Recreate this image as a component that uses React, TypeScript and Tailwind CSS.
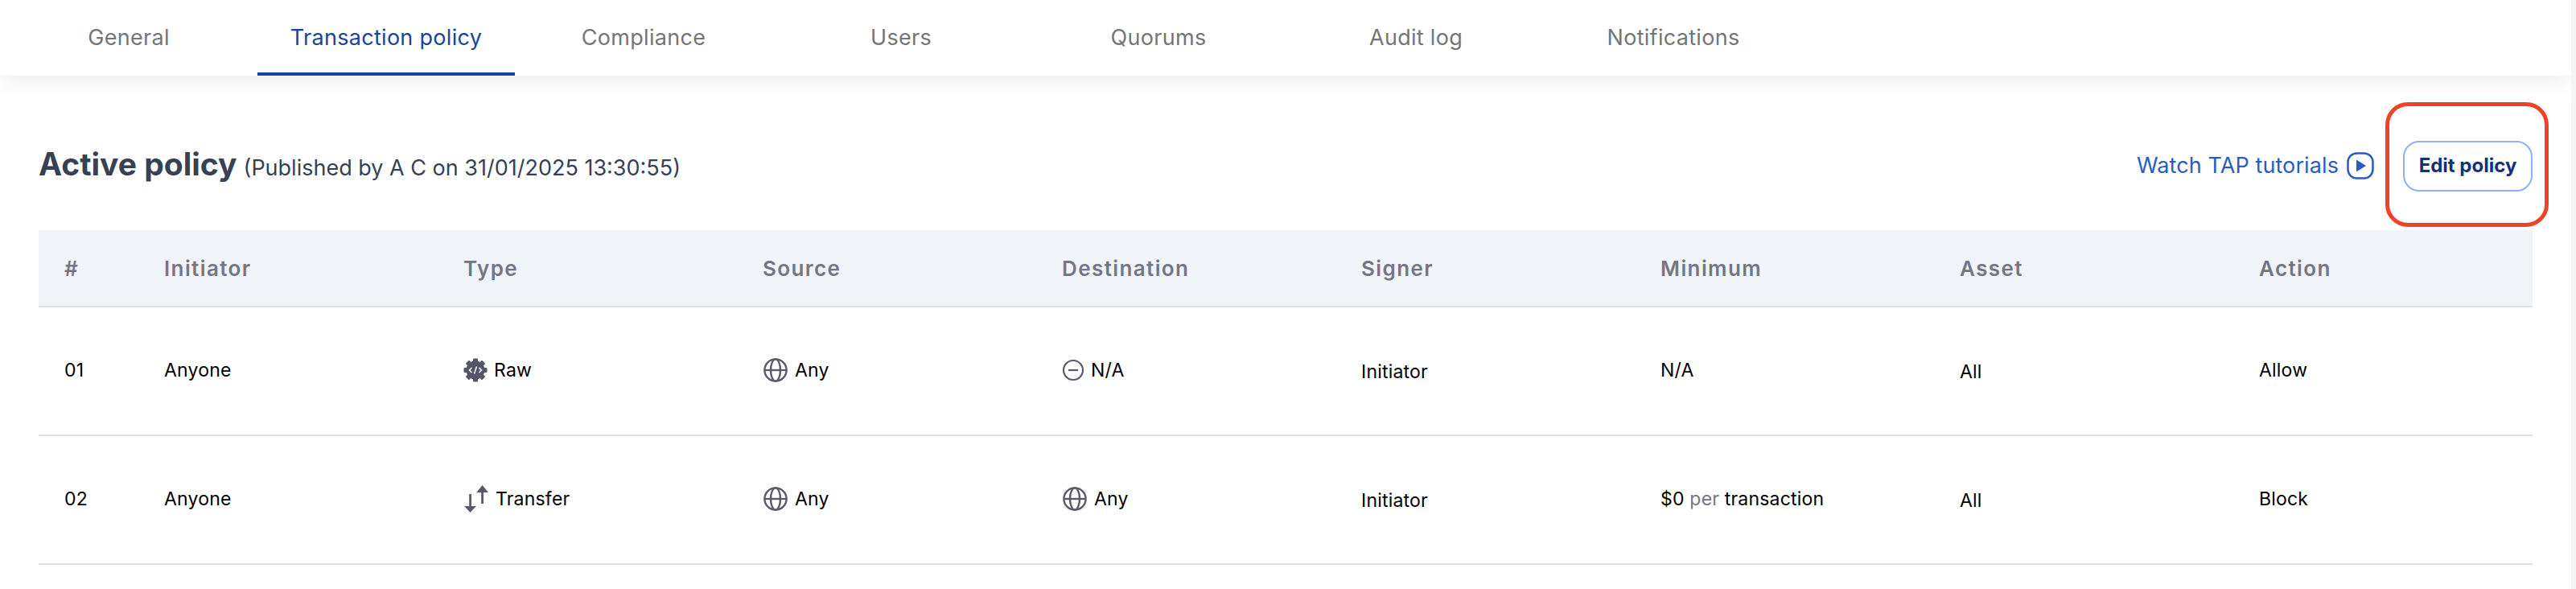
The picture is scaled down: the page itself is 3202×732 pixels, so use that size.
import React from "react";

function Globe() {
  return (
    <svg viewBox="0 0 32 32" className="w-[32px] h-[32px] shrink-0" fill="none" stroke="#5a5a6a" strokeWidth="2.4">
      <circle cx="16" cy="16" r="13.6" />
      <ellipse cx="16" cy="16" rx="6" ry="13.6" />
      <path d="M2.4 16h27.2" />
    </svg>
  );
}

function Minus() {
  return (
    <svg viewBox="0 0 28 28" className="w-[28px] h-[28px] shrink-0" fill="none" stroke="#5a5a6a" strokeWidth="2.2">
      <circle cx="14" cy="14" r="12" />
      <path d="M8 14h12" />
    </svg>
  );
}

function Gear() {
  const teeth = [0, 45, 90, 135, 180, 225, 270, 315];
  return (
    <svg viewBox="0 0 30 30" className="w-[30px] h-[30px] shrink-0">
      <circle cx="15" cy="15" r="11.5" fill="#55556a" />
      {teeth.map((a) => (
        <rect key={a} x="12" y="0.5" width="6" height="6" rx="1" fill="#55556a" transform={`rotate(${a} 15 15)`} />
      ))}
      <path d="M10.5 12 7.5 15l3 3M19.5 12l3 3-3 3M16.5 10.5l-3 9" fill="none" stroke="#fff" strokeWidth="1.5" />
    </svg>
  );
}

function Transfer() {
  return (
    <svg viewBox="0 0 32 34" className="w-[32px] h-[34px] shrink-0" fill="#5a5a6a">
      <path d="M23.6 0 31 9h-6v14h-2.800V9h-6z" />
      <path d="M7.200 11H10v15h6l-7.400 8L1 26h6.200z" />
    </svg>
  );
}

function Cell({ icon, children, nudge }: { icon?: React.ReactNode; children: React.ReactNode; nudge?: boolean }) {
  return (
    <div className={`w-[372px] shrink-0 flex items-center gap-[8px] pl-[32px] text-[23px] tracking-[0.2px] text-black ${nudge ? "pt-[2px]" : "pb-[2px]"}`}>
      {icon}
      <span>{children}</span>
    </div>
  );
}

const headers = ["Initiator", "Type", "Source", "Destination", "Signer", "Minimum", "Asset", "Action"];
const tabs = ["General", "Transaction policy", "Compliance", "Users", "Quorums", "Audit log", "Notifications"];

function Row({ n, type, typeIcon, dest, destIcon, min, action }: { n: string; type: string; typeIcon: React.ReactNode; dest: string; destIcon: React.ReactNode; min: React.ReactNode; action: string }) {
  return (
    <div className="flex h-[160px] border-b-2 border-[#e0e0e0]">
      <div className="w-[124px] shrink-0 flex items-center pl-[32px] pb-[2px] text-[23px] tracking-[0.2px] text-black">{n}</div>
      <Cell>Anyone</Cell>
      <Cell icon={typeIcon}>{type}</Cell>
      <Cell icon={<Globe />}>Any</Cell>
      <Cell icon={destIcon}>{dest}</Cell>
      <Cell nudge>Initiator</Cell>
      <Cell>{min}</Cell>
      <Cell nudge>All</Cell>
      <Cell>{action}</Cell>
    </div>
  );
}

export default function App() {
  return (
    <div className="w-[3202px] h-[732px] bg-[#f5f5f5] overflow-hidden font-['Inter',sans-serif] relative flex">
      <div className="w-[3196px] h-full bg-white overflow-hidden shrink-0">
        <div className="flex h-[94px] bg-white shadow-[0_6px_28px_rgba(0,0,0,0.08)] relative">
          {tabs.map((t, i) => (
            <div
              key={t}
              className={`w-[320px] flex items-center justify-center text-[27px] tracking-[0.3px] ${i === 1 ? "text-[#1a439c] border-b-4 border-[#1a439c] pt-[4px]" : "text-[#757575]"}`}
            >
              {t}
            </div>
          ))}
        </div>
        <div className="pl-[48px] pr-[48px]">
          <div className="h-[192px] pt-[32px] flex items-center justify-between">
            <div className="flex items-baseline gap-[8px] text-[#374151] mb-[4px]">
              <span className="text-[39px] font-bold">Active policy</span>
              <span className="text-[27px]">(Published by A C on 31/01/2025 13:30:55)</span>
            </div>
            <div className="flex items-center">
              <span className="text-[27px] tracking-[0.1px] text-[#2a5cbf]">Watch TAP tutorials</span>
              <svg viewBox="0 0 34 34" className="w-[34px] h-[34px] ml-[10px]" fill="none">
                <rect x="1.500" y="1.500" width="31" height="31" rx="11" stroke="#2a5cbf" strokeWidth="2.500" />
                <path d="M12 9.500 24 17l-12 7.500z" fill="#2a5cbf" />
              </svg>
              <button className="ml-[36px] w-[161px] h-[63px] rounded-[20px] border-2 border-[#8fb0f5] bg-white text-[#13307a] text-[24px] font-bold">
                Edit policy
              </button>
            </div>
          </div>
          <div className="flex h-[96px] bg-[#f0f3f8] border-b-2 border-[#e0e0e0] text-[#757584] text-[26px] tracking-[1.4px] font-semibold items-center">
            <div className="w-[124px] shrink-0 pl-[32px]">#</div>
            {headers.map((h) => (
              <div key={h} className="w-[372px] shrink-0 pl-[32px]">{h}</div>
            ))}
          </div>
          <Row n="01" type="Raw" typeIcon={<Gear />} dest="N/A" destIcon={<Minus />} min="N/A" action="Allow" />
          <Row
            n="02"
            type="Transfer"
            typeIcon={<Transfer />}
            dest="Any"
            destIcon={<Globe />}
            min={<>$0 <span className="text-[#757584]">per</span> transaction</>}
            action="Block"
          />
        </div>
      </div>
      <div className="absolute left-[2965px] top-[127px] w-[203px] h-[155px] rounded-[28px] border-[5px] border-[#ee4426]" />
    </div>
  );
}
